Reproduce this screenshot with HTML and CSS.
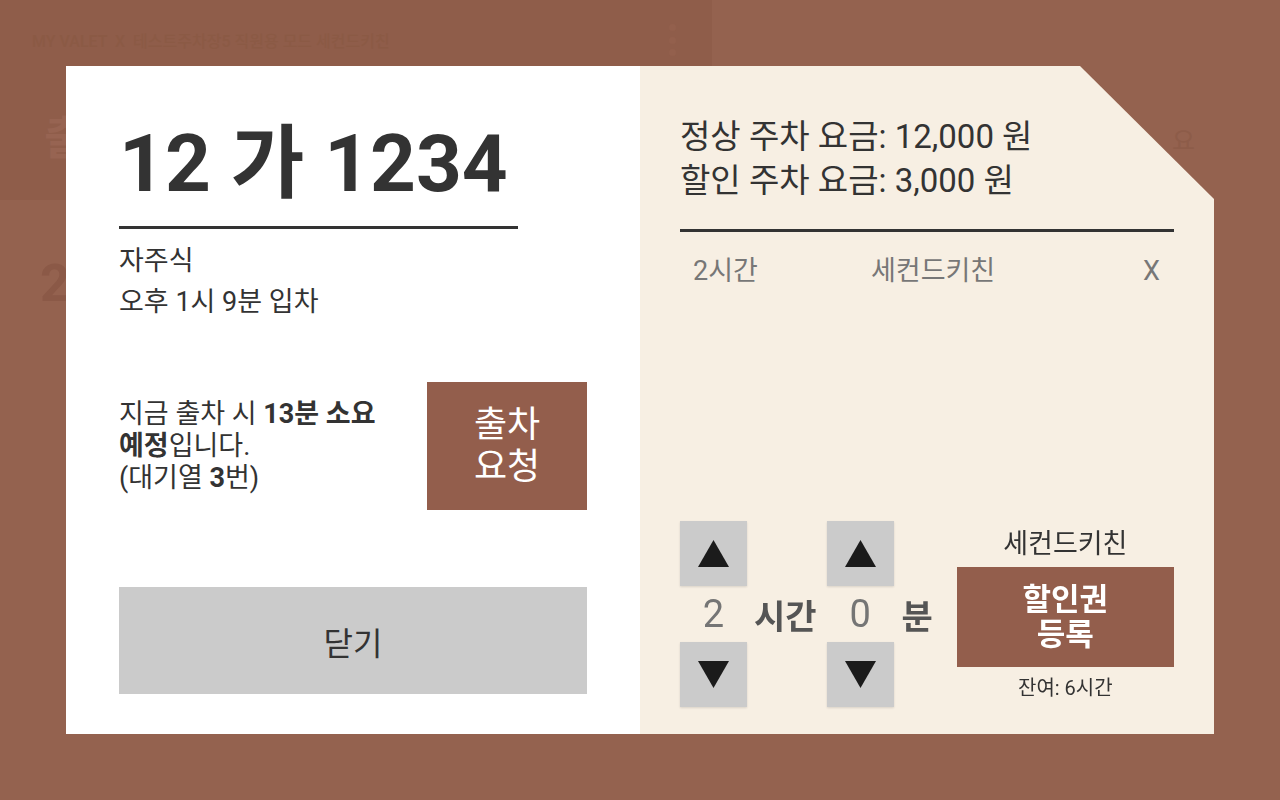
FILE: index.html
```html
<!DOCTYPE html>
<html lang="ko">
<head>
<meta charset="utf-8">
<title>출차 요청</title>
<link rel="stylesheet" href="styles.css">
</head>
<body>
<div class="page">
  <div class="page-row">
    <div class="page-top">
      <div class="page-header">
        <span class="page-title">MY VALET &nbsp;X&nbsp; 테스트주차장5 직원용 모드 세컨드키친</span>
        <span class="page-dots"><i></i><i></i><i></i></span>
      </div>
      <div class="page-big">출</div>
    </div>
    <div class="page-side">요</div>
  </div>
  <div class="page-num">2</div>
</div>

<div class="overlay">
  <div class="modal">
    <section class="left">
      <div class="plate">12 가 1234</div>
      <div class="info">
        <div>자주식</div>
        <div>오후 1시 9분 입차</div>
      </div>
      <div class="eta-row">
        <div class="eta">지금 출차 시 <b>13분 소요<br>예정</b>입니다.<br>(대기열 <b>3</b>번)</div>
        <div class="exit-btn btn-brown">출차<br>요청</div>
      </div>
      <div class="close-btn">닫기</div>
    </section>

    <section class="right">
      <div class="fees">
        <div>정상 주차 요금: 12,000 원</div>
        <div>할인 주차 요금: 3,000 원</div>
      </div>
      <div class="divider"></div>
      <div class="coupon-row">
        <span>2시간</span>
        <span>세컨드키친</span>
        <span>X</span>
      </div>

      <div class="controls">
        <div class="spinner">
          <div class="spin-btn"><svg width="31" height="27" viewBox="0 0 31 27"><polygon points="15.5,0 31,27 0,27" fill="#1b1b1b"/></svg></div>
          <div class="spin-val">2</div>
          <div class="spin-btn"><svg width="31" height="27" viewBox="0 0 31 27"><polygon points="0,0 31,0 15.5,27" fill="#1b1b1b"/></svg></div>
        </div>
        <span class="unit unit-h">시간</span>
        <div class="spinner">
          <div class="spin-btn"><svg width="31" height="27" viewBox="0 0 31 27"><polygon points="15.5,0 31,27 0,27" fill="#1b1b1b"/></svg></div>
          <div class="spin-val">0</div>
          <div class="spin-btn"><svg width="31" height="27" viewBox="0 0 31 27"><polygon points="0,0 31,0 15.5,27" fill="#1b1b1b"/></svg></div>
        </div>
        <span class="unit unit-m">분</span>
        <div class="coupon-box">
          <div class="coupon-name">세컨드키친</div>
          <div class="coupon-btn btn-brown">할인권<br>등록</div>
          <div class="remain">잔여: 6시간</div>
        </div>
      </div>
    </section>
  </div>
</div>
</body>
</html>
```

FILE: styles.css
```css
* {
  box-sizing: border-box;
}

html,
body {
  margin: 0;
  padding: 0;
}

body {
  width: 1280px;
  height: 800px;
  overflow: hidden;
  background: #94624f;
  font-family: Roboto, "Noto Sans CJK KR", sans-serif;
  color: #333;
}

/* underlying (dimmed) page */
.page-row {
  display: flex;
}

.page-top {
  width: 712px;
  height: 200px;
  background: #8f5d4a;
}

.page-header {
  height: 80px;
  display: flex;
  align-items: center;
  justify-content: space-between;
  padding: 0 36px 0 32px;
}

.page-title {
  font-size: 16px;
  font-weight: 500;
  color: #8b5a45;
  white-space: nowrap;
}

.page-dots {
  display: flex;
  flex-direction: column;
  gap: 5.5px;
}

.page-dots i {
  display: block;
  width: 7px;
  height: 7px;
  border-radius: 50%;
  background: #93604d;
}

.page-big {
  margin: 30px 0 0 44px;
  font-size: 46px;
  line-height: 56px;
  font-weight: 700;
  color: #976452;
  white-space: nowrap;
}

.page-side {
  margin: 126px 0 0 460px;
  font-size: 25px;
  line-height: 32px;
  color: #8d5c49;
  white-space: nowrap;
}

.page-num {
  margin: 54px 0 0 40px;
  font-size: 52px;
  line-height: 60px;
  font-weight: 700;
  color: #8b5947;
}

/* modal */
.overlay {
  position: fixed;
  inset: 0;
  display: flex;
  align-items: center;
  justify-content: center;
}

.modal {
  display: flex;
  width: 1148px;
  height: 668px;
}

.left {
  width: 574px;
  background: #ffffff;
  padding: 58px 53px 40px;
  display: flex;
  flex-direction: column;
}

.plate {
  width: 399px;
  font-size: 80px;
  line-height: 80px;
  font-weight: 700;
  color: #333;
  padding-bottom: 22px;
  border-bottom: 3px solid #333;
  white-space: nowrap;
}

.info {
  margin-top: 12px;
  font-size: 27px;
  line-height: 41px;
  color: #333;
}

.eta-row {
  margin-top: 59px;
  display: flex;
  align-items: center;
  justify-content: space-between;
}

.eta {
  font-size: 27px;
  line-height: 32px;
  color: #333;
}

.eta b {
  font-weight: 700;
}

.btn-brown {
  background: #935e4c;
  color: #ffffff;
}

.exit-btn {
  width: 160px;
  height: 128px;
  font-size: 36px;
  line-height: 42px;
  display: flex;
  align-items: center;
  justify-content: center;
  text-align: center;
}

.close-btn {
  margin-top: auto;
  height: 107px;
  background: #cbcbcb;
  font-size: 32px;
  color: #333;
  display: flex;
  align-items: center;
  justify-content: center;
}

.right {
  width: 574px;
  background: #f7efe3;
  clip-path: polygon(0 0, 440px 0, 574px 133px, 574px 100%, 0 100%);
  padding: 49px 40px 27px;
  display: flex;
  flex-direction: column;
}

.fees {
  font-size: 33px;
  line-height: 44px;
  color: #333;
  white-space: nowrap;
}

.divider {
  margin-top: 26px;
  height: 3px;
  background: #333;
}

.coupon-row {
  margin-top: 19px;
  display: grid;
  grid-template-columns: 178px 1fr auto;
  padding: 0 14px 0 13px;
  font-size: 27px;
  line-height: 40px;
  color: #777;
}

.controls {
  margin-top: auto;
  display: flex;
  align-items: center;
}

.spinner {
  width: 67px;
  flex-shrink: 0;
  display: flex;
  flex-direction: column;
}

.spin-btn {
  height: 65px;
  background: #cbcbcb;
  display: flex;
  align-items: center;
  justify-content: center;
  box-shadow: 0 1px 2px rgba(0, 0, 0, 0.12);
}

.spin-val {
  height: 56px;
  display: flex;
  align-items: center;
  justify-content: center;
  font-size: 38px;
  color: #757575;
}

.unit {
  font-size: 34px;
  font-weight: 700;
  color: #555;
  white-space: nowrap;
  flex-shrink: 0;
}

.unit-h {
  margin: 0 10px 0 7px;
}

.unit-m {
  margin: 0 24px 0 8px;
}

.coupon-box {
  width: 217px;
  flex-shrink: 0;
  display: flex;
  flex-direction: column;
  align-items: center;
}

.coupon-name {
  font-size: 27px;
  line-height: 36px;
  color: #333;
  margin-bottom: 5px;
}

.coupon-btn {
  width: 217px;
  height: 100px;
  font-size: 31px;
  line-height: 35px;
  font-weight: 700;
  text-align: center;
  display: flex;
  align-items: center;
  justify-content: center;
}

.remain {
  margin-top: 7px;
  font-size: 20px;
  line-height: 28px;
  color: #333;
}
```
